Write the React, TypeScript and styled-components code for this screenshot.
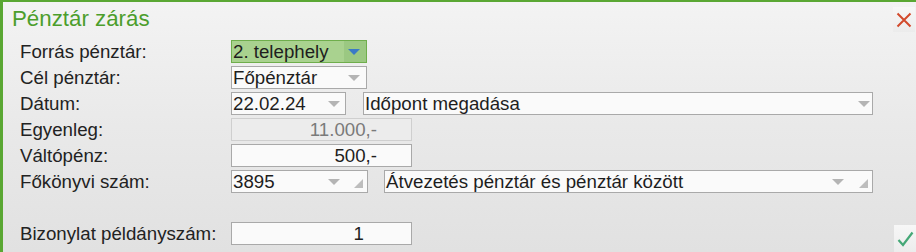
import React from "react";
import styled, { createGlobalStyle } from "styled-components";

/* global */
const GlobalStyle = createGlobalStyle`
  html, body {
    margin: 0;
    padding: 0;
    background: #e6e6e6;
  }
  * {
    box-sizing: border-box;
  }
`;

/* styled */
const Window = styled.div`
  width: 916px;
  height: 252px;
  overflow: hidden;
  border-left: 3px solid #5aa733;
  border-top: 2px solid #5aa733;
  background: linear-gradient(to bottom, #f3f3f3 0%, #e9e9e9 50%, #e1e1e1 100%);
  font-family: "Liberation Sans", Arial, sans-serif;
  color: #222;
  display: flex;
  flex-direction: column;
`;

const Header = styled.div`
  display: flex;
  justify-content: space-between;
  align-items: flex-start;
  padding: 4px 1px 0 9px;
  height: 38px;
`;

const Title = styled.h1`
  margin: 0;
  font-size: 22.3px;
  line-height: 26px;
  font-weight: normal;
  color: #4c9e2c;
`;

const IconButton = styled.button<{ $top: number }>`
  width: 22px;
  height: ${(p) => (p.$top > 1 ? 27 : 25)}px;
  margin-top: ${(p) => p.$top}px;
  padding: 0;
  border: none;
  background: linear-gradient(to bottom, #f7f7f7, #ececec);
  display: flex;
  align-items: center;
  justify-content: center;
  cursor: pointer;
`;

const Form = styled.div`
  display: flex;
  flex-direction: column;
  gap: 3px;
  padding-left: 17px;
`;

const Row = styled.div<{ $gapTop?: number }>`
  display: flex;
  align-items: flex-start;
  height: 23px;
  margin-top: ${(p) => p.$gapTop || 0}px;
`;

const Label = styled.div`
  width: 211px;
  font-size: 18.7px;
  line-height: 23px;
  white-space: nowrap;
`;

const Box = styled.div<{ $w: number; $ml?: number; $green?: boolean; $disabled?: boolean }>`
  width: ${(p) => p.$w}px;
  height: 23px;
  margin-left: ${(p) => p.$ml || 0}px;
  display: flex;
  align-items: stretch;
  border: 1px solid ${(p) => (p.$green ? "#6fae4c" : p.$disabled ? "#cfcfcf" : "#a9a9a9")};
  background: ${(p) => (p.$green ? "#a9d28f" : p.$disabled ? "#ececec" : "#fafafa")};
  font-size: 18.7px;
  line-height: 21px;
  color: ${(p) => (p.$disabled ? "#7a7a7a" : "#1e1e1e")};
`;

const BoxText = styled.div<{ $right?: boolean; $pr?: number }>`
  flex: 1;
  padding-left: 1px;
  padding-right: ${(p) => p.$pr || 0}px;
  text-align: ${(p) => (p.$right ? "right" : "left")};
  white-space: nowrap;
  overflow: hidden;
`;

const DropButton = styled.div<{ $green?: boolean; $w: number }>`
  width: ${(p) => p.$w}px;
  display: flex;
  align-items: center;
  justify-content: flex-start;
  position: relative;
  background: ${(p) => (p.$green ? "#9bc882" : "transparent")};
`;

const Arrow = styled.span<{ $color: string; $size: number }>`
  width: 0;
  height: 0;
  margin-left: 4px;
  border-left: ${(p) => p.$size}px solid transparent;
  border-right: ${(p) => p.$size}px solid transparent;
  border-top: ${(p) => Math.round(p.$size * 0.95)}px solid ${(p) => p.$color};
`;

const Corner = styled.span`
  position: absolute;
  right: 4px;
  bottom: 4px;
  width: 0;
  height: 0;
  border-left: 9px solid transparent;
  border-bottom: 9px solid #bdbdbd;
`;

/* DOM */
interface ComboProps {
  width: number;
  text: string;
  ml?: number;
  green?: boolean;
  btn?: number;
  resize?: boolean;
}

const Combo: React.FC<ComboProps> = (props): JSX.Element => {
  const btn = props.btn || 22;
  return (
    <Box $w={props.width} $ml={props.ml} $green={props.green}>
      <BoxText>{props.text}</BoxText>
      <DropButton $green={props.green} $w={btn}>
        <Arrow $color={props.green ? "#3a7ac6" : "#b4b4b4"} $size={6} />
        {props.resize && <Corner />}
      </DropButton>
    </Box>
  );
};

const App: React.FC = (): JSX.Element => {
  return (
    <>
      <GlobalStyle />
      <Window>
        <Header>
          <Title>Pénztár zárás</Title>
          <IconButton $top={1} aria-label="Bezárás">
            <svg width="16" height="16" viewBox="0 0 16 16">
              <path d="M1.5 1.5 L14.5 14.5 M14.5 1.5 L1.5 14.5" stroke="#d24a2c" strokeWidth="2" fill="none" />
            </svg>
          </IconButton>
        </Header>
        <Form>
          <Row>
            <Label>Forrás pénztár:</Label>
            <Combo width={136} text="2. telephely" green />
          </Row>
          <Row>
            <Label>Cél pénztár:</Label>
            <Combo width={136} text="Főpénztár" />
          </Row>
          <Row>
            <Label>Dátum:</Label>
            <Combo width={115} text="22.02.24" btn={21} />
            <Combo width={510} ml={17} text="Időpont megadása" btn={18} />
          </Row>
          <Row>
            <Label>Egyenleg:</Label>
            <Box $w={181} $disabled>
              <BoxText $right $pr={34}>11.000,-</BoxText>
            </Box>
          </Row>
          <Row>
            <Label>Váltópénz:</Label>
            <Box $w={181}>
              <BoxText $right $pr={34}>500,-</BoxText>
            </Box>
          </Row>
          <Row>
            <Label>Főkönyvi szám:</Label>
            <Combo width={137} text="3895" btn={43} resize />
            <Combo width={489} ml={16} text="Átvezetés pénztár és pénztár között" btn={44} resize />
          </Row>
          <Row $gapTop={26}>
            <Label>Bizonylat példányszám:</Label>
            <Box $w={181}>
              <BoxText $right $pr={47}>1</BoxText>
            </Box>
            <div style={{ flex: 1 }} />
            <IconButton $top={3} aria-label="Mentés">
              <svg width="17" height="16" viewBox="0 0 17 16">
                <path d="M1.5 9 L6 14 L15.5 1.5" stroke="#45a877" strokeWidth="2.2" fill="none" />
              </svg>
            </IconButton>
          </Row>
        </Form>
      </Window>
    </>
  );
};

export default App;
